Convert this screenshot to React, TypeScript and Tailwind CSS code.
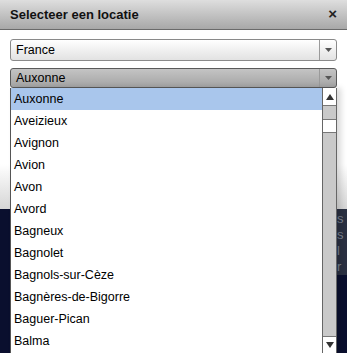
const cities = [
  "Auxonne",
  "Aveizieux",
  "Avignon",
  "Avion",
  "Avon",
  "Avord",
  "Bagneux",
  "Bagnolet",
  "Bagnols-sur-Cèze",
  "Bagnères-de-Bigorre",
  "Baguer-Pican",
  "Balma",
];

function Arrow({ up }: { up?: boolean }) {
  return (
    <svg width="8" height="6" viewBox="0 0 8 6">
      <path d={up ? "M4 0 L8 6 L0 6 Z" : "M0 0 L8 0 L4 6 Z"} fill="#333" />
    </svg>
  );
}

function SelectBox({ value, active }: { value: string; active?: boolean }) {
  return (
    <div
      className={`flex h-full items-stretch rounded-[3px] border ${
        active
          ? "border-[#5a5a5a] bg-gradient-to-b from-[#c4c4c4] to-[#a4a4a4]"
          : "border-[#8a8a8a] bg-gradient-to-b from-white to-[#e2e2e2]"
      }`}
    >
      <div className="flex flex-1 items-center pl-[5px] text-[12.5px] text-black">{value}</div>
      <div className="flex w-[17px] items-center justify-center border-l border-[#9a9a9a]">
        <svg width="7" height="4" viewBox="0 0 7 4">
          <path d="M0 0 L7 0 L3.5 4 Z" fill="#555" />
        </svg>
      </div>
    </div>
  );
}

export default function App() {
  return (
    <div
      className="relative h-[353px] w-[347px] overflow-hidden bg-[#0a0f2e]"
      style={{ fontFamily: "'Liberation Sans', Arial, sans-serif" }}
    >
      <div className="flex h-[209px] flex-col">
        <div className="flex h-[30px] items-center justify-between border-b border-[#6a6a6a] bg-gradient-to-b from-[#dedede] to-[#a8a8a8] pl-[10px] pr-[10px]">
          <span className="text-[13px] font-bold text-[#111]">Selecteer een locatie</span>
          <span className="text-[15px] font-bold text-[#222]">×</span>
        </div>
        <div className="flex-1 bg-gradient-to-b from-white from-75% to-[#d6d6d6] pl-[10px] pr-[10px] pt-[9px]">
          <div className="h-[22px]">
            <SelectBox value="France" />
          </div>
          <div className="relative mt-[7px] h-[20px]">
            <SelectBox value="Auxonne" active />
            <div className="absolute left-0 right-0 top-[20px] flex h-[265px] border-l border-[#555] bg-white shadow-[4px_0_6px_rgba(0,0,0,0.15)]">
              <div className="flex-1">
                {cities.map((c, i) => (
                  <div
                    key={c}
                    className={`flex h-[22px] items-center pl-[3px] text-[12.5px] text-black ${
                      i === 0 ? "bg-[#a9c6ec]" : ""
                    }`}
                  >
                    {c}
                  </div>
                ))}
              </div>
              <div className="flex w-[15px] flex-col border-x border-[#666] bg-[#c9c9c9]">
                <div className="flex h-[18px] items-center justify-center border-b border-[#777] bg-white">
                  <Arrow up />
                </div>
                <div className="h-[13px]" />
                <div className="h-[14px] border-y border-[#777] bg-white" />
                <div className="flex-1" />
                <div className="flex h-[17px] items-center justify-center border-t border-[#777] bg-white">
                  <Arrow />
                </div>
              </div>
            </div>
          </div>
        </div>
      </div>
      <div className="flex">
        <div className="w-[337px]" />
        <div className="flex-1 bg-[#2a3042] pt-[2px] text-[13px] leading-[16px] text-[#7a8290]">
          <div>s</div>
          <div>s</div>
          <div>l</div>
          <div>r</div>
        </div>
      </div>
    </div>
  );
}
